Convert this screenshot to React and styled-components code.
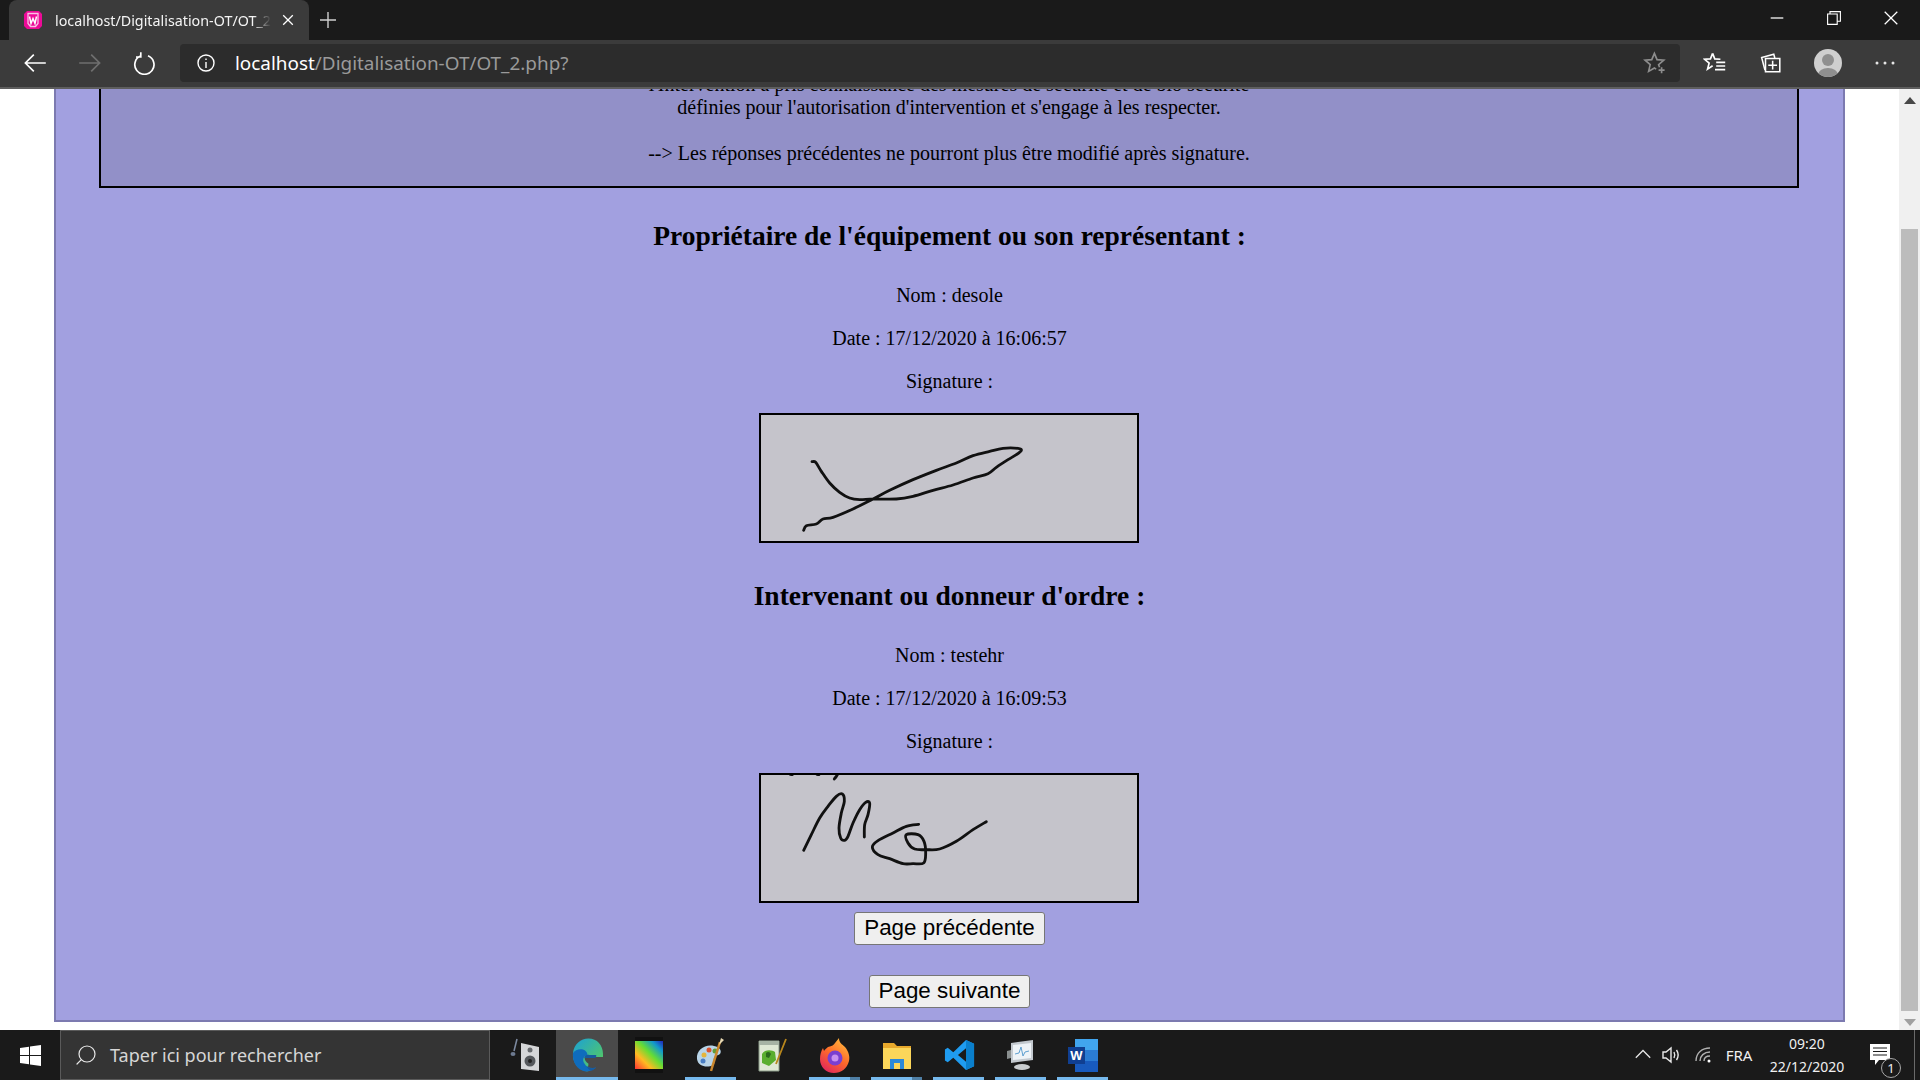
import React from 'react';
import styled, { createGlobalStyle } from 'styled-components';
import { Search } from 'lucide-react';

const GlobalStyle = createGlobalStyle`
  html, body { margin: 0; padding: 0; height: 100%; overflow: hidden; }
  #root { height: 100%; }
`;

const uiFont = `"Noto Sans", "Open Sans", sans-serif`;

// catmull-rom through the hand-read points, so tips of the pen strokes stay put
const smooth = (pts) => {
  let d = `M${pts[0][0]} ${pts[0][1]}`;
  for (let i = 0; i < pts.length - 1; i++) {
    const p0 = pts[i - 1] || pts[i];
    const p1 = pts[i];
    const p2 = pts[i + 1];
    const p3 = pts[i + 2] || p2;
    const c1x = p1[0] + (p2[0] - p0[0]) / 6;
    const c1y = p1[1] + (p2[1] - p0[1]) / 6;
    const c2x = p2[0] - (p3[0] - p1[0]) / 6;
    const c2y = p2[1] - (p3[1] - p1[1]) / 6;
    d += ` C${c1x} ${c1y} ${c2x} ${c2y} ${p2[0]} ${p2[1]}`;
  }
  return d;
};

const SIGNATURE_ONE = [
  [[217, 186], [228, 188], [245, 215], [270, 250], [300, 278], [330, 295], [360, 300], [400, 298], [470, 298], [520, 290], [580, 272], [640, 256], [700, 235], [745, 222], [770, 203], [805, 180], [830, 165], [845, 152], [835, 146], [790, 146], [750, 155], [700, 168], [650, 190], [590, 212], [520, 240], [450, 272], [400, 298], [340, 328], [280, 353], [250, 358], [230, 373], [200, 378], [192, 392]],
];

const SIGNATURE_TWO = [
  [[192, 272], [215, 225], [240, 175], [265, 140], [290, 110], [308, 103], [314, 125], [305, 160], [298, 205], [303, 235], [315, 242], [325, 230], [340, 190], [360, 150], [378, 128], [390, 130], [385, 165], [375, 195], [374, 232]],
  [[537, 194], [500, 200], [460, 220], [415, 243], [398, 262], [415, 285], [450, 297], [490, 312], [520, 312], [552, 310], [558, 280], [553, 245], [535, 225], [500, 225], [505, 250], [525, 268], [560, 270], [600, 268], [650, 245], [700, 210], [740, 186]],
  [[295, 42], [290, 50], [284, 58]],
  [[152, 44], [158, 45]],
  [[232, 44], [238, 45]],
];

const App = styled.div`
  height: 100vh;
  display: flex;
  flex-direction: column;
  background: #fff;
`;

const TabStrip = styled.div`
  height: 40px;
  flex: none;
  display: flex;
  align-items: center;
  background: #1a1a1a;
  padding-left: 9px;
  color: #fff;
`;

const Tab = styled.div`
  width: 300px;
  height: 40px;
  display: flex;
  align-items: center;
  background: #3b3b3b;
  border-radius: 8px 8px 0 0;
  padding-left: 14px;
  box-sizing: border-box;
`;

const TabTitle = styled.span`
  width: 216px;
  margin-left: 12px;
  overflow: hidden;
  white-space: nowrap;
  font: 14.3px ${uiFont};
  color: #f4f4f4;
  -webkit-mask-image: linear-gradient(to right, #000 92%, transparent);
  mask-image: linear-gradient(to right, #000 92%, transparent);
`;

const IconSlot = styled.span`
  display: flex;
  align-items: center;
  justify-content: center;
  flex: none;
  width: ${(p) => p.$w || 40}px;
`;

const WindowControl = styled(IconSlot)`
  padding-bottom: 5px;
`;

const Grow = styled.div`
  flex: 1;
`;

const Toolbar = styled.div`
  height: 49px;
  flex: none;
  display: flex;
  align-items: center;
  box-sizing: border-box;
  background: #3b3b3b;
  border-bottom: 2px solid #5e5e5e;
  padding: 0 7px 2px 7px;
`;

const NavButton = styled.span`
  display: flex;
  align-items: center;
  justify-content: center;
  flex: none;
  width: 55px;
  height: 38px;
`;

const AddressBar = styled.div`
  flex: none;
  width: 1500px;
  height: 38px;
  margin: 0 0 0 8px;
  display: flex;
  align-items: center;
  background: #2c2c2c;
  border-radius: 4px;
`;

const UrlText = styled.span`
  font: 18.9px ${uiFont};
  color: #9a9a9a;
  margin-left: 3px;
  b { font-weight: 400; color: #fff; }
`;

const ToolIcons = styled.div`
  display: flex;
  align-items: center;
  flex: none;
  margin-left: 5px;
`;

const Viewport = styled.div`
  flex: 1;
  min-height: 0;
  display: flex;
  overflow: hidden;
  background: #fff;
`;

const PageArea = styled.div`
  flex: 1;
  min-width: 0;
  padding: 0 54px;
`;

const Panel = styled.div`
  height: 949px;
  margin-top: -16px;
  box-sizing: border-box;
  background: #a2a0e0;
  border: 2px solid #7c7ab0;
  border-top: none;
  display: flex;
  flex-direction: column;
  align-items: center;
  font-family: "Liberation Serif", "Times New Roman", serif;
  font-size: 20px;
  color: #000;
`;

const Notice = styled.div`
  width: 1700px;
  box-sizing: border-box;
  flex: none;
  align-self: flex-start;
  margin-left: 43px;
  background: #9290c8;
  border: 2px solid #000;
  border-top: none;
  padding-bottom: 21px;
  text-align: center;
  line-height: 23px;
`;

const Heading = styled.h2`
  margin: 32px 0;
  font-size: 27.5px;
  line-height: 32px;
  font-weight: 700;
`;

const Line = styled.p`
  margin: 0 0 20px;
  line-height: 23px;
`;

const SignatureFrame = styled.svg`
  display: block;
  flex: none;
  width: 380px;
  height: 130px;
  box-sizing: border-box;
  background: #c5c4cb;
  border: 2px solid #000;
  margin: 0 1px 5px 0;
`;

const PageButton = styled.button`
  font-family: "Liberation Sans", Arial, sans-serif;
  font-size: 22.4px;
  line-height: 27px;
  height: 33px;
  padding: 0 9px 2px;
  background: #efefef;
  border: 1px solid #767676;
  border-radius: 3px;
  color: #000;
  margin-top: ${(p) => p.$top}px;
  flex: none;
`;

const Scrollbar = styled.div`
  flex: none;
  width: 21px;
  display: flex;
  flex-direction: column;
  align-items: center;
  background: #f0f0f0;
`;

const ScrollArrow = styled.div`
  flex: none;
  height: 22px;
  display: flex;
  align-items: center;
  justify-content: center;
`;

const ScrollThumb = styled.div`
  width: 17px;
  height: 782px;
  margin-top: 118px;
  flex: none;
  background: #bcbcbc;
`;

const Taskbar = styled.div`
  height: 50px;
  flex: none;
  display: flex;
  align-items: stretch;
  background: #1a1a1a;
  color: #f0f0f0;
  font-family: ${uiFont};
`;

const StartButton = styled.div`
  width: 60px;
  flex: none;
  display: flex;
  align-items: center;
  justify-content: center;
`;

const SearchBox = styled.div`
  width: 430px;
  flex: none;
  box-sizing: border-box;
  display: flex;
  align-items: center;
  background: #343434;
  border: 1px solid #5a5a5a;
  padding-left: 13px;
  margin-right: 4px;
  font-size: 18px;
  color: #d6d6d6;
  span { margin-left: 12px; }
`;

const TaskButton = styled.div`
  width: 62px;
  flex: none;
  display: flex;
  align-items: center;
  justify-content: center;
  position: relative;
  background: ${(p) => (p.$active ? '#4a4a4a' : 'transparent')};
  &::after {
    content: '';
    display: ${(p) => (p.$running ? 'block' : 'none')};
    position: absolute;
    bottom: 0;
    height: 3px;
    left: ${(p) => (p.$active ? 0 : 5)}px;
    right: ${(p) => (p.$active ? 0 : 6)}px;
    background: ${(p) => (p.$split ? 'linear-gradient(to right, #76b9ed 80%, #4f7fa5 80%)' : '#76b9ed')};
  }
`;

const Tray = styled.div`
  flex: 1;
  display: flex;
  align-items: center;
  justify-content: flex-end;
`;

const TrayText = styled.span`
  font-size: 15px;
  width: 36px;
  box-sizing: border-box;
  padding-right: 4px;
  text-align: center;
`;

const Clock = styled.div`
  width: 100px;
  margin: 0 2px 0 -2px;
  text-align: center;
  font-size: 14px;
  line-height: 23px;
`;

const NotifySlot = styled.div`
  width: 42px;
  margin-right: 13px;
  display: flex;
  justify-content: center;
  position: relative;
`;

const Badge = styled.span`
  position: absolute;
  left: 22px;
  top: 14px;
  width: 20px;
  height: 20px;
  box-sizing: border-box;
  border-radius: 50%;
  border: 1px solid #a8a8a8;
  background: #1a1a1a;
  font-size: 13px;
  line-height: 18px;
  text-align: center;
`;

const ShowDesktop = styled.div`
  width: 5px;
  align-self: stretch;
  border-left: 1px solid #6a6a6a;
`;

const Signature = ({ strokes }) => (
  <SignatureFrame viewBox="64 46 1128 378">
    {strokes.map((s, i) => (
      <path key={i} d={smooth(s)} fill="none" stroke="#111" strokeWidth="8.5" strokeLinecap="round" strokeLinejoin="round" />
    ))}
  </SignatureFrame>
);

const line = { fill: 'none', stroke: 'currentColor', strokeWidth: 1.4 };

const Wamp = () => (
  <svg width="20" height="20" viewBox="0 0 20 20">
    <path d="M4 1h12l3 3v12l-3 3H4l-3-3V4z" fill="#ec0a97" />
    <path d="M5 3.500h10v10l-2.500 3h-5l-2.500-3z" fill="none" stroke="#f9c2e4" strokeWidth="1.300" />
    <path d="M6.500 6.500l1.500 7 2-5 2 5 1.500-7" fill="none" stroke="#fff" strokeWidth="1.500" />
  </svg>
);

const Glyph = ({ size = 20, color = '#fff', children }) => (
  <svg width={size} height={size} viewBox="0 0 20 20" style={{ color }} {...line}>
    {children}
  </svg>
);

const WinLogo = () => (
  <svg width="21" height="21" viewBox="0 0 21 21" fill="#fff">
    <path d="M0 3l9-1.3V10H0zM10 1.500L21 0v10H10zM0 11h9v8.300L0 18zM10 11h11v10l-11-1.500z" />
  </svg>
);

const EdgeIcon = () => (
  <svg width="31" height="34" viewBox="0 0 32 34">
    <defs>
      <linearGradient id="edgeTop" x1="0" y1="0" x2="1" y2="1">
        <stop offset="0" stopColor="#1aa0d8" />
        <stop offset="1" stopColor="#5fd04f" />
      </linearGradient>
    </defs>
    <path d="M1 15C2 6 9 0 17 0c9 0 15 7 15 16v3H13c0 3 1 5 4 7l-1 8C7 33 0 25 1 15z" fill="url(#edgeTop)" />
    <path d="M1 15c3-5 14-6 15 2-4 1-6 5-3 9 2 4 7 5 12 4-3 3-7 4-11 4C6 33 0 25 1 15z" fill="#0f6cbd" />
    <path d="M13 20c0-3 3-4 5-3h7c0 2 0 3-2 3zM15 28c3 3 7 3 10 2l-4 3c-3 0-5-2-6-5z" fill="#175a9e" />
  </svg>
);

const GamutIcon = () => (
  <svg width="28" height="36" viewBox="0 0 28 36">
    <defs>
      <linearGradient id="gamut" x1="0" y1="1" x2="1" y2="0">
        <stop offset="0" stopColor="#f33" />
        <stop offset="0.3" stopColor="#fb2" />
        <stop offset="0.55" stopColor="#6d3" />
        <stop offset="0.8" stopColor="#19c" />
        <stop offset="1" stopColor="#22b" />
      </linearGradient>
    </defs>
    <rect x="0" y="0" width="28" height="36" fill="#111" />
    <rect x="0" y="4" width="28" height="28" fill="url(#gamut)" />
  </svg>
);

const PaletteIcon = () => (
  <svg width="30" height="36" viewBox="0 0 30 36">
    <path d="M1 22C0 13 9 7 18 9c6 1 8 5 6 8-2 2-5 1-6 4-1 3 2 5-1 7-5 3-15 2-16-6z" fill="#b8d4e8" />
    <circle cx="8" cy="18" r="2.500" fill="#e4b53c" />
    <circle cx="13" cy="13" r="2.500" fill="#d9522f" />
    <circle cx="19" cy="14" r="2.500" fill="#5e9e3a" />
    <circle cx="7" cy="24" r="2.500" fill="#4a7ec4" />
    <path d="M24 5L15 34" stroke="#c9862d" strokeWidth="2.500" />
    <path d="M23 8l2-7 3 2z" fill="#e7d8b2" />
  </svg>
);

const NotepadIcon = () => (
  <svg width="30" height="34" viewBox="0 0 30 34">
    <path d="M1 3h20v30H1z" fill="#dfe8d4" stroke="#8a9a88" />
    <path d="M1 3h20v4H1z" fill="#a7b3a4" />
    <path d="M4 16c3-5 10-4 13-2l1 8-7 6-7-3z" fill="#5aae2e" />
    <path d="M8 15c2-2 4-1 5 1l-2 4-3-1z" fill="#2c6b1c" />
    <path d="M28 1L18 26" stroke="#b8861c" strokeWidth="1.800" />
  </svg>
);

const FirefoxIcon = () => (
  <svg width="30" height="35" viewBox="0 0 30 35">
    <defs>
      <linearGradient id="fox" x1="0.8" y1="0" x2="0.2" y2="1">
        <stop offset="0" stopColor="#ffbd3e" />
        <stop offset="0.5" stopColor="#ff6a2a" />
        <stop offset="1" stopColor="#e0245e" />
      </linearGradient>
    </defs>
    <path d="M19 0c0 5 3 6 6 9 4 5 5 10 4 14-2 8-8 12-15 12C6 35 0 29 0 21c0-4 1-8 3-11l1 3c1-2 3-3 4-4 4-1 6-2 7-4z" fill="url(#fox)" />
    <circle cx="15" cy="20" r="7.500" fill="#7a3fd0" />
    <circle cx="15" cy="20" r="3.500" fill="#c890ef" />
  </svg>
);

const FolderIcon = () => (
  <svg width="28" height="28" viewBox="0 0 28 28">
    <path d="M0 2h11l3 3h14v23H0z" fill="#e8a92c" />
    <path d="M0 7h28v21H0z" fill="#fbd65a" />
    <path d="M7 18h14v10h-4v-6h-6v6H7z" fill="#2b88d8" />
  </svg>
);

const VsCodeIcon = () => (
  <svg width="31" height="36" viewBox="0 0 100 100">
    <path d="M71 2l26 12v72L71 98 30 59 12 73 3 68V32l9-5 18 14zM71 28L45 50l26 22z" fill="#1f9cf0" />
    <path d="M71 2l26 12v72L71 98z" fill="#0a7fcc" />
  </svg>
);

const MonitorIcon = () => (
  <svg width="28" height="32" viewBox="0 0 28 32">
    <path d="M4 4l22-3v20l-22 3z" fill="#c3c9cf" />
    <path d="M6 6l18-2v15l-18 2z" fill="#eef3f7" />
    <path d="M8 15l4-1 2-6 2 9 2-4 4-1" fill="none" stroke="#5e9fd0" strokeWidth="1" />
    <path d="M0 12l4-1v8l-4 1z" fill="#8a8f8f" />
    <ellipse cx="15" cy="28" rx="8" ry="3" fill="#c9cdd0" />
  </svg>
);

const WordIcon = () => (
  <svg width="30" height="33" viewBox="0 0 30 33">
    <path d="M7 0h23v33H7z" fill="#185abd" />
    <path d="M7 0h23v11H7z" fill="#41a5ee" />
    <path d="M7 11h23v11H7z" fill="#2b7cd3" />
    <rect x="0" y="8" width="17" height="17" fill="#103f91" />
    <text x="8.500" y="21" fontSize="13" fontWeight="700" fontFamily="Liberation Sans, sans-serif" fill="#fff" textAnchor="middle">W</text>
  </svg>
);

const SpeakerAppIcon = () => (
  <svg width="30" height="36" viewBox="0 0 30 36">
    <path d="M11 6l18 4v24l-18-2z" fill="#d5d6d8" />
    <circle cx="20" cy="24" r="5.500" fill="#55585c" />
    <circle cx="20" cy="24" r="2" fill="#222" />
    <circle cx="20" cy="13" r="2.500" fill="#66696d" />
    <path d="M7 2L4 14" stroke="#7d8aa0" strokeWidth="1.500" />
    <ellipse cx="3" cy="17" rx="2.500" ry="2" fill="#6d7a90" />
  </svg>
);

const TASK_APPS = [
  { icon: <SpeakerAppIcon /> },
  { icon: <EdgeIcon />, active: true, running: true },
  { icon: <GamutIcon /> },
  { icon: <PaletteIcon />, running: true },
  { icon: <NotepadIcon /> },
  { icon: <FirefoxIcon />, running: true, split: true },
  { icon: <FolderIcon />, running: true, split: true },
  { icon: <VsCodeIcon />, running: true },
  { icon: <MonitorIcon />, running: true },
  { icon: <WordIcon />, running: true },
];

export default function Page() {
  return (
    <App>
      <GlobalStyle />
      <TabStrip>
        <Tab>
          <Wamp />
          <TabTitle>localhost/Digitalisation-OT/OT_2.php?</TabTitle>
          <IconSlot $w={34}>
            <Glyph size={16}><path d="M4 4l12 12M16 4L4 16" strokeWidth="1.600" /></Glyph>
          </IconSlot>
        </Tab>
        <IconSlot $w={38}>
          <Glyph size={20} color="#cfcfcf"><path d="M10 2v16M2 10h16" /></Glyph>
        </IconSlot>
        <Grow />
        <WindowControl $w={57}><Glyph size={18}><path d="M3 10h14" /></Glyph></WindowControl>
        <WindowControl $w={57}><Glyph size={16}><path d="M2 5h12v13H2zM5 5V2h13v12h-4" /></Glyph></WindowControl>
        <WindowControl $w={58}><Glyph size={18}><path d="M3 3l14 14M17 3L3 17" /></Glyph></WindowControl>
      </TabStrip>
      <Toolbar>
        <NavButton>
          <Glyph size={24}><path d="M19 10H2M9 3l-7 7 7 7" /></Glyph>
        </NavButton>
        <NavButton>
          <Glyph size={24} color="#6f6f6f"><path d="M1 10h17M11 3l7 7-7 7" /></Glyph>
        </NavButton>
        <NavButton>
          <Glyph size={24}><path d="M6.500 4a8 8 0 1 0 6 0M6.500 1v4H2.500" /></Glyph>
        </NavButton>
        <AddressBar>
          <IconSlot $w={52}>
            <Glyph size={20}><circle cx="10" cy="10" r="8" /><path d="M10 9v6M10 5.500v1.500" /></Glyph>
          </IconSlot>
          <UrlText><b>localhost</b>/Digitalisation-OT/OT_2.php?</UrlText>
          <Grow />
          <IconSlot $w={50}>
            <Glyph size={24} color="#8d8d8d">
              <path d="M13.800 13.500L13 11.400l4.300-3.700-5.600-.5L9.500 2 7.300 7.200l-5.600.5L6 11.400 4.700 17l4.800-2.800 1.500.9" />
              <path d="M15.500 13.500v5M13 16h5" />
            </Glyph>
          </IconSlot>
        </AddressBar>
        <ToolIcons>
          <IconSlot $w={60}>
            <Glyph size={24}>
              <path d="M8 2l1.800 4.600 4.700.3M8 2L6.200 6.600l-4.900.3 3.800 3.200-1.300 5 4.200-2.800" />
              <path d="M11 9.500h7.500M11 12.500h7.500M10 15.500h8.500" />
            </Glyph>
          </IconSlot>
          <IconSlot $w={52}>
            <Glyph size={22}>
              <path d="M4.500 16.500L1.500 5l11-3 1 3.500" />
              <path d="M5 6h13v12H5zM11.500 8v8M7.500 12h8" />
            </Glyph>
          </IconSlot>
          <IconSlot $w={62}>
            <svg width="28" height="28" viewBox="0 0 28 28">
              <defs>
                <clipPath id="avatar"><circle cx="14" cy="14" r="14" /></clipPath>
              </defs>
              <circle cx="14" cy="14" r="14" fill="#cfcfcf" />
              <g clipPath="url(#avatar)" fill="#8f8f8f">
                <circle cx="14" cy="11" r="6" />
                <ellipse cx="14" cy="26" rx="10" ry="7" />
              </g>
            </svg>
          </IconSlot>
          <IconSlot $w={52}>
            <svg width="20" height="4" viewBox="0 0 20 4" fill="#e6e6e6">
              <circle cx="2" cy="2" r="1.500" /><circle cx="10" cy="2" r="1.500" /><circle cx="18" cy="2" r="1.500" />
            </svg>
          </IconSlot>
        </ToolIcons>
      </Toolbar>

      <Viewport>
        <PageArea>
          <Panel>
            <Notice>
              l'Intervention a pris connaissance des mesures de sécurité et de bio sécurité<br />
              définies pour l'autorisation d'intervention et s'engage à les respecter.<br />
              <br />
              --&gt; Les réponses précédentes ne pourront plus être modifié après signature.
            </Notice>
            <Heading>Propriétaire de l'équipement ou son représentant :</Heading>
            <Line>Nom : desole</Line>
            <Line>Date : 17/12/2020 à 16:06:57</Line>
            <Line>Signature :</Line>
            <Signature strokes={SIGNATURE_ONE} />
            <Heading>Intervenant ou donneur d'ordre :</Heading>
            <Line>Nom : testehr</Line>
            <Line>Date : 17/12/2020 à 16:09:53</Line>
            <Line>Signature :</Line>
            <Signature strokes={SIGNATURE_TWO} />
            <PageButton $top={4}>Page précédente</PageButton>
            <PageButton $top={30}>Page suivante</PageButton>
          </Panel>
        </PageArea>
        <Scrollbar>
          <ScrollArrow>
            <svg width="12" height="7" viewBox="0 0 12 7" fill="#484848"><path d="M6 0l6 7H0z" /></svg>
          </ScrollArrow>
          <ScrollThumb />
          <Grow />
          <ScrollArrow>
            <svg width="12" height="7" viewBox="0 0 12 7" fill="#a0a0a0"><path d="M6 7l6-7H0z" /></svg>
          </ScrollArrow>
        </Scrollbar>
      </Viewport>

      <Taskbar>
        <StartButton><WinLogo /></StartButton>
        <SearchBox>
          <Search size={24} strokeWidth={1.2} color="#e8e8e8" style={{ transform: 'scaleX(-1)' }} />
          <span>Taper ici pour rechercher</span>
        </SearchBox>
        {TASK_APPS.map((app, i) => (
          <TaskButton key={i} $active={app.active} $running={app.running} $split={app.split}>
            {app.icon}
          </TaskButton>
        ))}
        <Tray>
          <IconSlot $w={28}>
            <Glyph size={18} color="#e8e8e8"><path d="M2 13l8-8 8 8" /></Glyph>
          </IconSlot>
          <IconSlot $w={28}>
            <Glyph size={20} color="#e8e8e8"><path d="M2 7h3l5-4v14l-5-4H2zM13 7c1 2 1 4 0 6M15.500 5c2 3 2 7 0 10" /></Glyph>
          </IconSlot>
          <IconSlot $w={38}>
            <Glyph size={20} color="#b0b0b0">
              <path d="M2 16c0-8 6-13 14-13M6 16c0-5 4-9 10-9" />
              <path d="M10 16c0-3 2-5 6-5" />
              <circle cx="15" cy="16" r="1.500" fill="#fff" stroke="none" />
            </Glyph>
          </IconSlot>
          <TrayText>FRA</TrayText>
          <Clock>09:20<br />22/12/2020</Clock>
          <NotifySlot>
            <svg width="20" height="22" viewBox="0 0 20 22">
              <path d="M0 0h20v16H9l-4 5v-5H0z" fill="#fff" />
              <path d="M3 4h14M3 7.500h14M3 11h14" stroke="#1a1a1a" strokeWidth="1.200" />
            </svg>
            <Badge>1</Badge>
          </NotifySlot>
          <ShowDesktop />
        </Tray>
      </Taskbar>
    </App>
  );
}
